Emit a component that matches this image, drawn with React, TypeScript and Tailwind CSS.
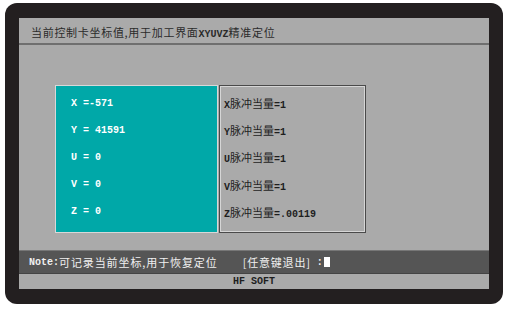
import React from "react";

const rows = [
  { left: "X =-571", axis: "X", eq: "=1" },
  { left: "Y = 41591", axis: "Y", eq: "=1" },
  { left: "U = 0", axis: "U", eq: "=1" },
  { left: "V = 0", axis: "V", eq: "=1" },
  { left: "Z = 0", axis: "Z", eq: "=.00119" },
];

const mono = "font-['Liberation_Mono','Noto_Sans_CJK_SC',monospace] font-bold";
const cjk = "font-['Noto_Sans_CJK_SC',sans-serif]";

export default function App() {
  return (
    <div className="w-[510px] h-[312px] bg-white pl-[5px] pt-[3px]">
      <div className="w-[498px] h-[301px] rounded-[12px] bg-[#231f20] pl-[14px] pr-[14px] pt-[15px] pb-[15px]">
        <div className="flex h-full flex-col bg-[#aaaaaa]">
          {/* header */}
          <div className="flex h-[27px] items-baseline border-b-2 border-[#6f6f6f] pl-[12px] pt-[6px] text-[11px] tracking-[0.7px] text-[#2a2a2a]">
            <span className={cjk}>当前控制卡坐标值,用于加工界面</span>
            <span className={`${mono} text-[10px] tracking-normal`}>XYUVZ</span>
            <span className={cjk}>精准定位</span>
          </div>

          {/* content */}
          <div className="flex flex-1 pl-[36px] pt-[40px]">
            <div className="flex h-[148px] w-[163px] flex-col border border-[#d8d8d8] bg-[#00a8a8] pl-[15px] pt-[11px]">
              {rows.map((r) => (
                <div key={r.axis} className={`${mono} h-[28px] text-[10px] leading-[14px] text-white whitespace-pre`}>
                  {r.left}
                </div>
              ))}
            </div>
            <div className="ml-px flex h-[148px] w-[147px] flex-col border border-[#4a4a4a] pl-[4px] pt-[10px] shadow-[inset_1px_1px_0_#d6d6d6,inset_-1px_-1px_0_#d6d6d6]">
              {rows.map((r) => (
                <div key={r.axis} className="flex h-[28px] items-baseline leading-[14px] text-[#1e1e1e]">
                  <span className={`${mono} text-[10px]`}>{r.axis}</span>
                  <span className={`${cjk} text-[11px]`}>脉冲当量</span>
                  <span className={`${mono} text-[10px]`}>{r.eq}</span>
                </div>
              ))}
            </div>
          </div>

          {/* note bar */}
          <div className="flex h-[23px] items-center border-t border-[#777] bg-[#555555] pl-[10px] text-[#f0f0f0]">
            <span className={`${mono} text-[10px]`}>Note:</span>
            <span className={`${cjk} text-[11px] tracking-[0.9px]`}>可记录当前坐标,用于恢复定位</span>
            <span className={`${cjk} ml-[25px] text-[11px] tracking-[0.8px]`}>[任意键退出]</span>
            <span className={`${mono} ml-[6px] text-[10px]`}>:</span>
            <span className="ml-[1px] h-[10px] w-[6px] bg-white" />
          </div>

          {/* footer */}
          <div className={`${mono} flex h-[16px] items-center justify-center border-t border-[#444] text-[10px] text-[#1e1e1e]`}>
            HF SOFT
          </div>
        </div>
      </div>
    </div>
  );
}
